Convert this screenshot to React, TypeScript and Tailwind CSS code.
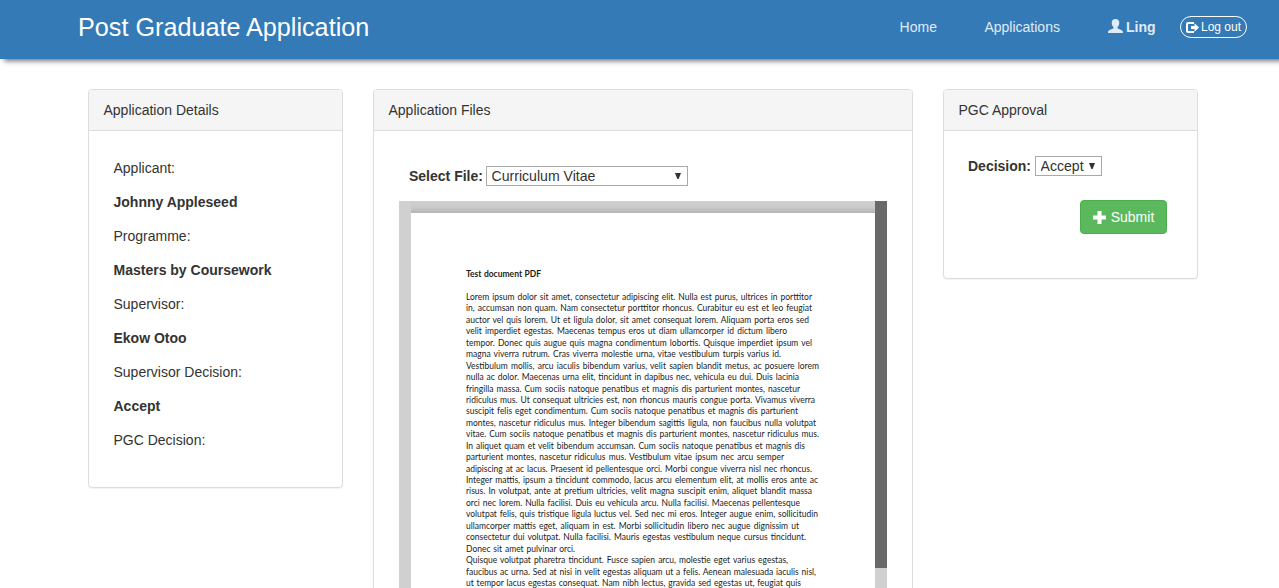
import type { ReactNode } from 'react';

const details: [string, string | null][] = [
  ['Applicant:', 'Johnny Appleseed'],
  ['Programme:', 'Masters by Coursework'],
  ['Supervisor:', 'Ekow Otoo'],
  ['Supervisor Decision:', 'Accept'],
  ['PGC Decision:', null],
];

// Each printed line with its set width in pixels.
const documentLines: [string, number][] = [
  ['Lorem ipsum dolor sit amet, consectetur adipiscing elit. Nulla est purus, ultrices in porttitor', 346],
  ['in, accumsan non quam. Nam consectetur porttitor rhoncus. Curabitur eu est et leo feugiat', 346],
  ['auctor vel quis lorem. Ut et ligula dolor, sit amet consequat lorem. Aliquam porta eros sed', 343],
  ['velit imperdiet egestas. Maecenas tempus eros ut diam ullamcorper id dictum libero', 321],
  ['tempor. Donec quis augue quis magna condimentum lobortis. Quisque imperdiet ipsum vel', 346],
  ['magna viverra rutrum. Cras viverra molestie urna, vitae vestibulum turpis varius id.', 315],
  ['Vestibulum mollis, arcu iaculis bibendum varius, velit sapien blandit metus, ac posuere lorem', 353],
  ['nulla ac dolor. Maecenas urna elit, tincidunt in dapibus nec, vehicula eu dui. Duis lacinia', 333],
  ['fringilla massa. Cum sociis natoque penatibus et magnis dis parturient montes, nascetur', 334],
  ['ridiculus mus. Ut consequat ultricies est, non rhoncus mauris congue porta. Vivamus viverra', 349],
  ['suscipit felis eget condimentum. Cum sociis natoque penatibus et magnis dis parturient', 332],
  ['montes, nascetur ridiculus mus. Integer bibendum sagittis ligula, non faucibus nulla volutpat', 350],
  ['vitae. Cum sociis natoque penatibus et magnis dis parturient montes, nascetur ridiculus mus.', 353],
  ['In aliquet quam et velit bibendum accumsan. Cum sociis natoque penatibus et magnis dis', 339],
  ['parturient montes, nascetur ridiculus mus. Vestibulum vitae ipsum nec arcu semper', 318],
  ['adipiscing at ac lacus. Praesent id pellentesque orci. Morbi congue viverra nisl nec rhoncus.', 346],
  ['Integer mattis, ipsum a tincidunt commodo, lacus arcu elementum elit, at mollis eros ante ac', 352],
  ['risus. In volutpat, ante at pretium ultricies, velit magna suscipit enim, aliquet blandit massa', 346],
  ['orci nec lorem. Nulla facilisi. Duis eu vehicula arcu. Nulla facilisi. Maecenas pellentesque', 334],
  ['volutpat felis, quis tristique ligula luctus vel. Sed nec mi eros. Integer augue enim, sollicitudin', 352],
  ['ullamcorper mattis eget, aliquam in est. Morbi sollicitudin libero nec augue dignissim ut', 333],
  ['consectetur dui volutpat. Nulla facilisi. Mauris egestas vestibulum neque cursus tincidunt.', 340],
  ['Donec sit amet pulvinar orci.', 109],
  ['Quisque volutpat pharetra tincidunt. Fusce sapien arcu, molestie eget varius egestas,', 322],
  ['faucibus ac urna. Sed at nisi in velit egestas aliquam ut a felis. Aenean malesuada iaculis nisl,', 350],
  ['ut tempor lacus egestas consequat. Nam nibh lectus, gravida sed egestas ut, feugiat quis', 335],
];

function UserIcon() {
  return (
    <svg viewBox="0 0 15 14" className="h-[14px] w-[15px] shrink-0" fill="currentColor">
      <path d="M7.500 0C10 0 11.300 1.500 11.300 3.700C11.300 5.500 10.600 7.100 9.500 8V9.300C9.700 10 14.900 11 14.900 12.700V14H.1V12.700C.1 11 5.300 10 5.500 9.300V8C4.400 7.100 3.700 5.500 3.700 3.700C3.700 1.500 5 0 7.500 0Z" />
    </svg>
  );
}

function LogoutIcon() {
  return (
    <svg viewBox="0 0 13 11" className="h-[11px] w-[13px] shrink-0" fill="currentColor">
      <path d="M2 0H8V2H2.500Q2 2 2 2.500V8.500Q2 9 2.500 9H8V11H2Q0 11 0 9V2Q0 0 2 0Z" />
      <path d="M8.500 1.300L13 5.500L8.500 9.700V7H5V4H8.500Z" />
    </svg>
  );
}

function PlusIcon() {
  return (
    <svg viewBox="0 0 13 13" className="h-[13px] w-[13px] shrink-0" fill="currentColor">
      <path d="M4.500 0H8.500V4.500H13V8.500H8.500V13H4.500V8.500H0V4.500H4.500Z" />
    </svg>
  );
}

function Select({ value, className }: { value: string; className: string }) {
  return (
    <div className={`grid h-5 items-center border border-[#a9a9a9] bg-white ${className}`}>
      <select className="col-start-1 row-start-1 h-[18px] w-full appearance-none bg-transparent pl-[4.5px] text-[14.1px] leading-[18px] outline-none">
        <option>{value}</option>
      </select>
      <svg viewBox="0 0 6 6" className="pointer-events-none col-start-1 row-start-1 mr-[6px] h-[6px] w-[6px] justify-self-end" fill="#333">
        <path d="M0 0H6L3.600 6H2.400Z" />
      </svg>
    </div>
  );
}

function Panel({ title, className, children }: { title: string; className: string; children: ReactNode }) {
  return (
    <section className={`shrink-0 rounded border border-[#ddd] bg-white shadow-[0_1px_1px_rgba(0,0,0,0.05)] ${className}`}>
      <h2 className="h-[41px] rounded-t-[3px] border-b border-[#ddd] bg-[#f5f5f5] px-[14.5px] py-[10px] text-sm leading-5">{title}</h2>
      {children}
    </section>
  );
}

export default function App() {
  return (
    <div className="flex h-[588px] w-[1279px] flex-col overflow-hidden bg-white font-['Liberation_Sans',Arial,sans-serif] text-sm leading-5 text-[#333]">
      <header className="flex h-[59px] shrink-0 items-start justify-between bg-[#337ab7] pr-8 pl-[78px] text-[#e0ebf5] shadow-[4px_2px_5px_0_rgba(0,0,0,0.55)]">
        <h1 className="pt-[9px] text-[25.2px] leading-9 text-white">Post Graduate Application</h1>
        <nav className="flex pt-[16px]">
          <a className="mt-px mr-[47.5px]">Home</a>
          <a className="mt-px mr-[48px]">Applications</a>
          <a className="mt-px mr-[24.5px] flex gap-[3px] font-bold">
            <span className="mt-[2px]"><UserIcon /></span>
            <span>Ling</span>
          </a>
          <button className="flex h-[22px] w-[67px] items-center justify-center gap-[2px] rounded-[11px] border border-white text-xs leading-[18px] text-white">
            <LogoutIcon />
            <span>Log out</span>
          </button>
        </nav>
      </header>

      <main className="flex h-[700px] shrink-0 items-start gap-[30px] pt-[30px] pl-[88px]">
        <Panel title="Application Details" className="h-[399px] w-[255px]">
          <dl className="flex flex-col gap-[14px] px-[24.5px] pt-[27px]">
            {details.map(([label, value]) => (
              <div key={label} className="flex flex-col gap-[14px]">
                <dt>{label}</dt>
                {value && <dd className="font-bold">{value}</dd>}
              </div>
            ))}
          </dl>
        </Panel>

        <Panel title="Application Files" className="h-[670px] w-[540px]">
          <div className="flex items-center gap-1 pt-[35px] pl-[35px]">
            <label className="w-[73px] font-bold whitespace-nowrap">Select File:</label>
            <Select value="Curriculum Vitae" className="w-[202px]" />
          </div>
          <div className="mt-[15px] ml-[25px] flex h-[460px] w-[488px] bg-[#d0d0d0] pl-3">
            <div className="flex w-[464px] flex-col">
              <div className="h-3 bg-linear-to-b from-[#d0d0d0] via-[#cbcbcb] to-[#b5b5b5]" />
              <article className="flex-1 bg-white pt-[56px] pl-[55px] font-['Lato','Open_Sans',sans-serif] text-[8.5px] leading-[11.44px] text-[#1c1c1c]">
                <h3 className="mb-[11.6px] w-[75px] font-bold whitespace-nowrap [text-align-last:justify]">Test document PDF</h3>
                {documentLines.map(([line, width]) => (
                  <p key={line} className="whitespace-nowrap [text-align-last:justify]" style={{ width }}>{line}</p>
                ))}
              </article>
            </div>
            <div className="w-3 bg-[#d0d0d0]">
              <div className="h-[367px] bg-[#696969]" />
            </div>
          </div>
        </Panel>

        <Panel title="PGC Approval" className="h-[190px] w-[255px]">
          <div className="flex items-center gap-1 pt-[25px] pl-6">
            <label className="w-[63px] font-bold whitespace-nowrap">Decision:</label>
            <Select value="Accept" className="w-[67px]" />
          </div>
          <div className="flex justify-end pt-6 pr-[30px]">
            <button className="flex h-[34px] w-[87px] items-center justify-center gap-[5px] rounded border border-[#4cae4c] bg-[#5cb85c] text-white">
              <PlusIcon />
              <span>Submit</span>
            </button>
          </div>
        </Panel>
      </main>
    </div>
  );
}
